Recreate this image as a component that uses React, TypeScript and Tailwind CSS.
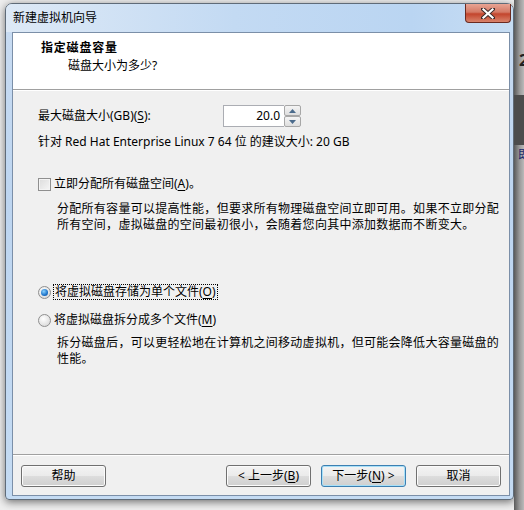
import React from "react";

const font = "font-['Noto_Sans','Noto_Sans_CJK_SC',sans-serif]";

function Key({ k }: { k: string }) {
  return <span className="underline underline-offset-2">{k}</span>;
}

function WinButton({ children, primary = false }: { children: React.ReactNode; primary?: boolean }) {
  return (
    <div
      className={`w-[85px] h-[22px] rounded-[3px] border ${
        primary ? "border-[#3c7fb1] shadow-[inset_0_0_0_1px_#a8e0f8]" : "border-[#707070] shadow-[inset_0_0_0_1px_#fbfbfb]"
      } bg-[linear-gradient(#f3f3f3_0%,#ebebeb_48%,#dddddd_50%,#cfcfcf_100%)] flex items-center justify-center text-[12px] text-black`}
    >
      {children}
    </div>
  );
}

function Radio({ checked }: { checked: boolean }) {
  return (
    <div className="w-[13px] h-[13px] rounded-full border border-[#8f8f8f] bg-[radial-gradient(circle_at_40%_35%,#ffffff,#e4e4e4_60%,#cfcfcf)] flex items-center justify-center shrink-0">
      {checked && (
        <div className="w-[7px] h-[7px] rounded-full bg-[radial-gradient(circle_at_40%_35%,#8ad3ff,#1c72c9_60%,#0d4f97)]" />
      )}
    </div>
  );
}

export default function App() {
  return (
    <div className={`w-[524px] h-[510px] bg-[#efefef] flex pl-[5px] pt-[3px] overflow-hidden ${font}`}>
      {/* window */}
      <div className="w-[509px] h-[497px] shrink-0 rounded-t-[7px] rounded-b-[4px] border border-[#5f6b78] bg-[linear-gradient(#c9dcf2,#bdd5f0_40%,#c4dbf3)] shadow-[0_2px_8px_rgba(0,0,0,0.55)] flex flex-col">
        {/* title bar */}
        <div className="h-[28px] flex items-start rounded-t-[6px] bg-[linear-gradient(90deg,#dde9f6,#c3daf3_45%,#bad5f2_80%,#c7ddf3)]">
          <div className="pl-[7px] pt-[6px] text-[12px] leading-[16px] text-black">新建虚拟机向导</div>
          <div className="flex-1" />
          <div className="mr-[2px] w-[46px] h-[19px] rounded-b-[4px] border border-t-0 border-[#6b2a20] bg-[linear-gradient(#e8a493,#d47a66_45%,#c3452d_55%,#d9836b)] flex items-center justify-center">
            <svg width="14" height="11" viewBox="0 0 14 11">
              <path d="M2 1 L12 10 M12 1 L2 10" stroke="#3a2a2a" strokeWidth="4" strokeLinecap="square" />
              <path d="M2.5 1.5 L11.5 9.5 M11.5 1.5 L2.5 9.5" stroke="#ffffff" strokeWidth="2.2" strokeLinecap="square" />
            </svg>
          </div>
        </div>

        {/* client area */}
        <div className="ml-[6px] mr-[3px] mb-[3px] flex-1 border border-[#7b8fa8] bg-[#f0f0f0] flex flex-col text-[12px] text-black">
          {/* header */}
          <div className="h-[57px] bg-white border-b border-[#a0a0a0] pt-[7px]">
            <div className="pl-[28px] font-bold leading-[16px] tracking-[0.8px]">指定磁盘容量</div>
            <div className="pl-[55px] mt-[2px] leading-[16px]">磁盘大小为多少?</div>
          </div>

          {/* content */}
          <div className="flex-1 pl-[25px] border-t border-white">
            <div className="mt-[14px] flex items-center h-[22px]">
              <div className="w-[185px]">
                最大磁盘大小(GB)(<Key k="S" />):
              </div>
              <div className="w-[61px] h-[22px] bg-white border border-[#abadb3] border-r-0 flex items-center justify-end pr-[4px]">
                20.0
              </div>
              <div className="w-[17px] h-[22px] flex flex-col">
                <div className="flex-1 border border-[#a7a7a7] rounded-[2px] bg-[linear-gradient(#f5f5f5,#dedede)] flex items-center justify-center">
                  <svg width="7" height="4" viewBox="0 0 7 4"><path d="M0 4 L3.5 0 L7 4 Z" fill="#4b6b8c" /></svg>
                </div>
                <div className="flex-1 border border-[#a7a7a7] rounded-[2px] bg-[linear-gradient(#f5f5f5,#dedede)] flex items-center justify-center">
                  <svg width="7" height="4" viewBox="0 0 7 4"><path d="M0 0 L7 0 L3.5 4 Z" fill="#4b6b8c" /></svg>
                </div>
              </div>
            </div>

            <div className="mt-[7px] leading-[16px]">针对 Red Hat Enterprise Linux 7 64 位 的建议大小: 20 GB</div>

            <div className="mt-[26px] flex items-center h-[16px] gap-[3px]">
              <div className="w-[13px] h-[13px] border border-[#8f8f8f] bg-[linear-gradient(135deg,#dcdcdc,#f6f6f6)] shadow-[inset_0_0_0_1px_#f4f4f4] shrink-0" />
              <div className="leading-[16px]">
                立即分配所有磁盘空间(<Key k="A" />)。
              </div>
            </div>

            <div className="mt-[9px] pl-[19px] leading-[16px] tracking-[0.28px]">
              <div>分配所有容量可以提高性能，但要求所有物理磁盘空间立即可用。如果不立即分配</div>
              <div>所有空间，虚拟磁盘的空间最初很小，会随着您向其中添加数据而不断变大。</div>
            </div>

            <div className="mt-[51px] flex items-center h-[16px] gap-[2px]">
              <Radio checked />
              <div className="leading-[14px] border border-dotted border-black px-[1px]">
                将虚拟磁盘存储为单个文件(<Key k="O" />)
              </div>
            </div>

            <div className="mt-[12px] flex items-center h-[16px] gap-[3px]">
              <Radio checked={false} />
              <div className="leading-[16px]">
                将虚拟磁盘拆分成多个文件(<Key k="M" />)
              </div>
            </div>

            <div className="mt-[7px] pl-[19px] leading-[16px] tracking-[0.28px]">
              <div>拆分磁盘后，可以更轻松地在计算机之间移动虚拟机，但可能会降低大容量磁盘的</div>
              <div>性能。</div>
            </div>
          </div>

          {/* footer */}
          <div className="border-t border-[#a0a0a0]">
            <div className="border-t border-white px-[8px] pt-[9px] pb-[8px] flex">
              <WinButton>帮助</WinButton>
              <div className="flex-1" />
              <div className="flex gap-[10px]">
                <WinButton>
                  &lt; 上一步(<Key k="B" />)
                </WinButton>
                <WinButton primary>
                  下一步(<Key k="N" />) &gt;
                </WinButton>
                <WinButton>取消</WinButton>
              </div>
            </div>
          </div>
        </div>
      </div>

      {/* background behind window on the right */}
      <div className="flex-1 -mt-[3px] h-[510px] bg-[linear-gradient(90deg,#5a5a5a,#9a9a9a_35%,#e6e6e6)] flex flex-col">
        <div className="h-[50px]" />
        <div className="h-[20px] pl-[5px] text-[16px] font-bold leading-[20px] text-[#222]">2</div>
        <div className="h-[25px]" />
        <div className="h-[50px] bg-[#4c4c4c]" />
        <div className="h-[20px] pl-[4px] text-[12px] leading-[20px] text-[#1a2a6a]">即</div>
      </div>
    </div>
  );
}
